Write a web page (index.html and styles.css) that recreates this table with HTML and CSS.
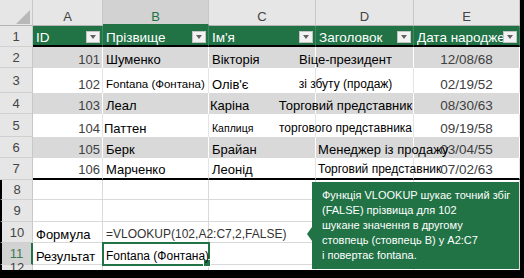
FILE: index.html
```html
<!DOCTYPE html>
<html lang="uk">
<head>
<meta charset="utf-8">
<title>VLOOKUP</title>
<link rel="stylesheet" href="styles.css">
</head>
<body>
<div class="sheet">
  <div class="ch corner"><svg width="14" height="14" viewBox="0 0 14 14"><polygon points="14,0 14,14 0,14" fill="#b8b8b8"/></svg></div>
  <div class="ch">A</div>
  <div class="ch sel">B</div>
  <div class="ch">C</div>
  <div class="ch">D</div>
  <div class="ch">E</div>

  <div class="rh">1</div>
  <div class="th"><span class="tt">ID</span><span class="dd"></span></div>
  <div class="th"><span class="tt">Прізвище</span><span class="dd"></span></div>
  <div class="th"><span class="tt">Ім'я</span><span class="dd"></span></div>
  <div class="th"><span class="tt">Заголовок</span><span class="dd"></span></div>
  <div class="th"><span class="tt">Дата народження</span><span class="dd"></span></div>

  <div class="rh">2</div>
  <div class="c t band num"><span>101</span></div>
  <div class="c t band"><span>Шуменко</span></div>
  <div class="c t band"><span>Вікторія</span></div>
  <div class="c t band dc"><span class="ov">Віце-президент</span></div>
  <div class="c t band dt"><span>12/08/68</span></div>

  <div class="rh">3</div>
  <div class="c t num"><span>102</span></div>
  <div class="c t"><span class="s115">Fontana (Фонтана)</span></div>
  <div class="c t"><span>Олів'є</span></div>
  <div class="c t dc"><span class="ov s12">зі збуту (продаж)</span></div>
  <div class="c t dt"><span>02/19/52</span></div>

  <div class="rh">4</div>
  <div class="c t band num"><span>103</span></div>
  <div class="c t band"><span>Леал</span></div>
  <div class="c t band tight"><span>Каріна</span></div>
  <div class="c t band dc"><span class="ov">Торговий представник</span></div>
  <div class="c t band dt"><span>08/30/63</span></div>

  <div class="rh">5</div>
  <div class="c t num"><span>104</span></div>
  <div class="c t tight"><span>Паттен</span></div>
  <div class="c t"><span class="s105">Каплиця</span></div>
  <div class="c t dc"><span class="ov s12">торгового представника</span></div>
  <div class="c t dt"><span>09/19/58</span></div>

  <div class="rh">6</div>
  <div class="c t band num"><span>105</span></div>
  <div class="c t band"><span>Берк</span></div>
  <div class="c t band"><span>Брайан</span></div>
  <div class="c t band dl"><span class="ov">Менеджер із продажу</span></div>
  <div class="c t band dt"><span>03/04/55</span></div>

  <div class="rh">7</div>
  <div class="c t last num"><span>106</span></div>
  <div class="c t last"><span>Марченко</span></div>
  <div class="c t last"><span>Леонід</span></div>
  <div class="c t last dl"><span class="ov s12">Торговий представник</span></div>
  <div class="c t last dt"><span>07/02/63</span></div>

  <div class="rh edge">8</div>
  <div class="c"></div><div class="c"></div><div class="c"></div><div class="c"></div><div class="c"></div>

  <div class="rh edge">9</div>
  <div class="c"></div><div class="c"></div><div class="c"></div><div class="c"></div><div class="c"></div>

  <div class="rh edge">10</div>
  <div class="c"><span>Формула</span></div>
  <div class="c"><span class="ov s12 formula">=VLOOKUP(102,A2:C7,2,FALSE)</span></div>
  <div class="c"></div><div class="c"></div><div class="c"></div>

  <div class="rh edge rsel">11</div>
  <div class="c"><span>Результат</span></div>
  <div class="c active"><span class="ov s12">Fontana (Фонтана)</span></div>
  <div class="c"></div><div class="c"></div><div class="c"></div>

  <div class="rh edge">12</div>
  <div class="c"></div><div class="c"></div><div class="c"></div><div class="c"></div><div class="c"></div>

  <div class="callout">Функція VLOOKUP шукає точний збіг<br>(FALSE) прізвища для 102<br>шукане значення в другому<br>стовпець (стовпець B) у A2:C7<br>і повертає fontana.</div>
</div>
</body>
</html>
```

FILE: styles.css
```css
* { box-sizing: border-box; }

body {
  margin: 0;
  background: #000;
  font-family: "Liberation Sans", Arial, sans-serif;
}

.sheet {
  position: relative;
  width: 520px;
  height: 270px;
  background: #fff;
  overflow: hidden;
  display: grid;
  grid-template-columns: 33px 70px 106px 107px 98px 106px;
  grid-template-rows: 26px 21px 21px 25px 21px 23px 21px 22px 20px 22px 21px 22px 6px;
}

/* column headers */
.ch {
  background: #e6e6e6;
  border-right: 1px solid #c8c8c8;
  border-bottom: 1px solid #b4b4b4;
  display: flex;
  align-items: flex-end;
  justify-content: center;
  padding-bottom: 1px;
  font-size: 13px;
  line-height: 15px;
  color: #444;
}
.ch.sel {
  background: #d2d2d2;
  color: #217346;
  border-bottom: 2px solid #217346;
  padding-bottom: 0;
}
.ch.corner {
  justify-content: flex-end;
  padding: 0 2px 1px 0;
}
.ch.corner svg { display: block; }

/* row headers */
.rh {
  background: #e6e6e6;
  border-right: 1px solid #c8c8c8;
  border-bottom: 1px solid #d0d0d0;
  display: flex;
  align-items: center;
  justify-content: center;
  font-size: 13px;
  color: #444;
}
.rh.edge { border-left: 2px solid #000; }
.rh.rsel {
  background: #d2d2d2;
  color: #3f7a55;
  border-right: 2px solid #217346;
}

/* table header row */
.th {
  background: #217346;
  color: #fff;
  border-right: 1px solid #3d8a5e;
  border-bottom: 2px solid #000;
  display: flex;
  align-items: flex-end;
  padding-left: 3px;
  font-size: 13.5px;
  line-height: 15px;
  white-space: nowrap;
  overflow: hidden;
}
.th .tt {
  flex: 1 1 auto;
  min-width: 0;
  overflow: hidden;
}
.dd {
  flex: 0 0 auto;
  width: 14px;
  height: 12px;
  margin: 0 2px 2px 0;
  background: #f2f2f2;
  border: 1px solid #c4c4c4;
  display: flex;
  align-items: center;
  justify-content: center;
}
.dd::after {
  content: "";
  border-left: 3.5px solid transparent;
  border-right: 3.5px solid transparent;
  border-top: 4px solid #606060;
}

/* ordinary cells */
.c {
  display: flex;
  align-items: flex-end;
  padding: 0 3px 0 3px;
  font-size: 13px;
  line-height: 15px;
  white-space: nowrap;
  color: #000;
  border-right: 1px solid #d9d9d9;
  border-bottom: 1px solid #d9d9d9;
}
.c.t {
  border-bottom: 0;
  border-right-color: #e4e4e4;
  padding-bottom: 1px;
}
.c.band {
  background: #d9d9d9;
  border-right-color: #fff;
}
.c.last { border-bottom: 2px solid #000; }
.c.tight { padding-left: 1px; }

.num {
  justify-content: flex-end;
  padding-right: 2px;
  color: #404040;
}
.dt {
  justify-content: center;
  color: #404040;
  font-size: 13.5px;
}
.dc { justify-content: center; }
.dc .ov { margin-right: 38px; }
.dl { padding-left: 2px; }

.ov { position: relative; z-index: 1; }

.s115 { font-size: 11.5px; }
.s105 { font-size: 10.5px; }
.s12 { font-size: 12px; }
.formula { color: #333; }

/* active cell B11 */
.c.active {
  position: relative;
  z-index: 2;
  outline: 2px solid #217346;
  outline-offset: -1px;
}
.c.active::after {
  content: "";
  position: absolute;
  right: -3px;
  bottom: -3px;
  width: 6px;
  height: 6px;
  background: #217346;
  border: 1px solid #fff;
}

/* callout bubble */
.callout {
  position: absolute;
  left: 312px;
  top: 182px;
  width: 207px;
  height: 87px;
  z-index: 5;
  background: #217346;
  color: #fff;
  font-size: 11px;
  line-height: 15px;
  padding: 6px 4px 0 10px;
  white-space: nowrap;
}
.callout::before {
  content: "";
  position: absolute;
  left: -5px;
  top: 45px;
  border-top: 7.5px solid transparent;
  border-bottom: 7.5px solid transparent;
  border-right: 5px solid #217346;
}
```
